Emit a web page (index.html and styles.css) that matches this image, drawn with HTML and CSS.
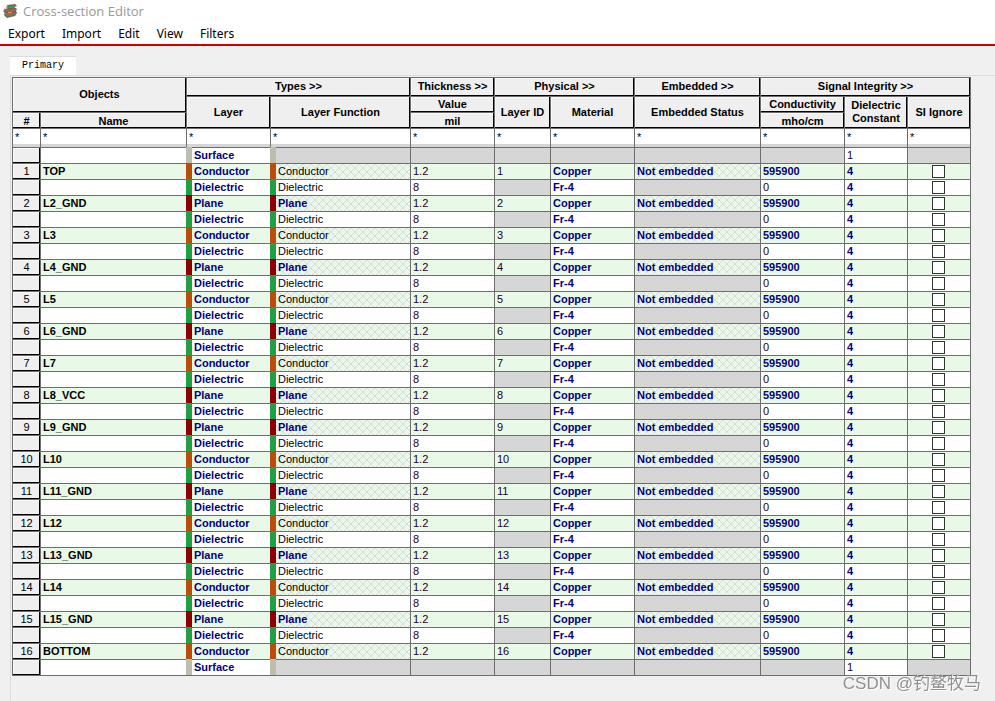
FILE: index.html
```html
<!DOCTYPE html>
<html lang="en">
<head>
<meta charset="utf-8">
<title>Cross-section Editor</title>
<link rel="stylesheet" href="styles.css">
</head>
<body>
<header class="titlebar">
  <svg class="logo" viewBox="0 0 16 16" aria-hidden="true">
    <path d="M5 2l8-1 2 2-3 1 3 2-1 2 1 2-2 3-8 2-3-3 1-2-2-2 2-2 3-1z" fill="#7a5f55"/>
    <path d="M6 3l6-1 2 1-5 2-4 0z" fill="#2e9a56"/>
    <path d="M2 7l4-1 7 0 1 1-5 2-6 0z" fill="#3a8b50"/>
    <path d="M3 11l4-1 7 0-2 2-6 2z" fill="#35925a"/>
    <path d="M4 4l9 1M2 6l5 2 7-1M2 10l5 2 7-2" fill="none" stroke="#c0605a" stroke-width="1"/>
    <path d="M6 9h4v1H6z" fill="#e0a030"/>
  </svg>
  <h1 class="title">Cross-section Editor</h1>
</header>
<nav class="menubar">
  <button type="button">Export</button>
  <button type="button">Import</button>
  <button type="button">Edit</button>
  <button type="button">View</button>
  <button type="button">Filters</button>
</nav>
<main class="workspace">
  <div class="tabs" role="tablist">
    <button type="button" class="tab" role="tab" aria-selected="true">Primary</button>
  </div>
  <section class="panel">
    <table class="stackup">
      <colgroup>
        <col class="c-num"><col><col class="c-84"><col class="c-func"><col class="c-84"><col class="c-id">
        <col class="c-84"><col class="c-emb"><col class="c-84"><col class="c-63"><col class="c-63">
      </colgroup>
      <thead>
        <tr class="groups">
          <th colspan="2" rowspan="2">Objects</th>
          <th colspan="2">Types &gt;&gt;</th>
          <th>Thickness &gt;&gt;</th>
          <th colspan="2">Physical &gt;&gt;</th>
          <th>Embedded &gt;&gt;</th>
          <th colspan="3">Signal Integrity &gt;&gt;</th>
        </tr>
        <tr class="fields">
          <th rowspan="2">Layer</th>
          <th rowspan="2">Layer Function</th>
          <th>Value</th>
          <th rowspan="2">Layer ID</th>
          <th rowspan="2">Material</th>
          <th rowspan="2">Embedded Status</th>
          <th>Conductivity</th>
          <th rowspan="2">Dielectric Constant</th>
          <th rowspan="2">SI Ignore</th>
        </tr>
        <tr>
          <th>#</th>
          <th>Name</th>
          <th>mil</th>
          <th>mho/cm</th>
        </tr>
        <tr class="filters">
          <td><input type="text" value="*" aria-label="Filter number"></td>
          <td><input type="text" value="*" aria-label="Filter name"></td>
          <td><input type="text" value="*" aria-label="Filter layer"></td>
          <td><input type="text" value="*" aria-label="Filter layer function"></td>
          <td><input type="text" value="*" aria-label="Filter thickness"></td>
          <td><input type="text" value="*" aria-label="Filter layer ID"></td>
          <td><input type="text" value="*" aria-label="Filter material"></td>
          <td><input type="text" value="*" aria-label="Filter embedded status"></td>
          <td><input type="text" value="*" aria-label="Filter conductivity"></td>
          <td><input type="text" value="*" aria-label="Filter dielectric constant"></td>
          <td><input type="text" value="*" aria-label="Filter SI ignore"></td>
        </tr>
      </thead>
      <tbody id="layers"></tbody>
    </table>
  </section>
</main>
<div class="watermark">CSDN @钓鳌牧马</div>
<script src="layers.js"></script>
</body>
</html>
```
FILE: styles.css
```css
* { box-sizing: border-box; }

body {
  margin: 0;
  min-height: 100vh;
  display: flex;
  flex-direction: column;
  background: #f0f0f0;
  color: #000;
  font: 11px/14px "Liberation Sans", Arial, sans-serif;
}

button { border: 0; padding: 0; background: none; color: inherit; font: inherit; }

.titlebar {
  display: flex;
  align-items: flex-start;
  gap: 5px;
  height: 24px;
  padding: 3px 0 0 2px;
  background: #fff;
}
.logo { width: 16px; height: 16px; }
.title {
  margin: 0;
  color: #999;
  font: 13px/16px "Open Sans", "Noto Sans", sans-serif;
}

.menubar {
  display: flex;
  gap: 17px;
  height: 22px;
  padding: 0 8px;
  border-bottom: 2px solid #c00;
  background: #fff;
  font: 12px/16px "Noto Sans", "Open Sans", sans-serif;
}

.workspace { flex: 1; display: flex; flex-direction: column; padding: 10px 0 0 10px; }
.tabs { display: flex; }
.tab {
  height: 19px;
  padding: 0 12px;
  border-top: 1px solid #dcdcdc;
  background: #fff;
  font: 10px/18px "Liberation Mono", monospace;
}
.panel {
  flex: 1;
  padding: 1px 24px 0 1px;
  border-top: 1px solid #dcdcdc;
  border-left: 1px solid #dcdcdc;
}

.stackup {
  width: 100%;
  table-layout: fixed;
  border-collapse: separate;
  border-spacing: 0;
  border-top: 1px solid #6e6e6e;
  border-left: 1px solid #6e6e6e;
}
.c-num { width: 28px; }
.c-84 { width: 84px; }
.c-func { width: 140px; }
.c-id { width: 56px; }
.c-emb { width: 126px; }
.c-63 { width: 63px; }

.stackup th, .stackup td {
  height: 16px;
  padding: 0 2px;
  border-right: 1px solid #6e6e6e;
  border-bottom: 1px solid #6e6e6e;
  background: #fff;
  text-align: left;
  white-space: nowrap;
}
.stackup th {
  background: #efefef;
  box-shadow: inset -1px -1px 0 #000, inset 1px 1px 0 #fafafa;
  text-align: center;
}
.stackup thead th { white-space: normal; }
.stackup .groups th { height: 19px; }
.stackup .groups th, .stackup .fields th { padding-bottom: 1px; line-height: 13px; }
.stackup tbody th { font-weight: 400; }
.stackup tbody th, .stackup tbody td { vertical-align: top; line-height: 14px; }

.stackup .filters td { height: 19px; padding: 0; background: #d6d6d6; vertical-align: top; }
.filters input {
  display: block;
  width: 100%;
  height: 15px;
  padding: 0 2px;
  border: 0;
  background: #fff;
  font: inherit;
}

.stackup .metal td { background-color: #e8f9e8; }
.stackup .off, .stackup .metal .off { background-color: #d6d6d6; }
.stackup .bold { font-weight: 700; }
.stackup .blue { color: #000080; font-weight: 700; }
.stackup .value { color: #200020; }
.stackup .hatch {
  background-image: url("data:image/svg+xml,%3Csvg xmlns='http://www.w3.org/2000/svg' width='8' height='8'%3E%3Cpath d='M0 0L8 8M8 0L0 8' stroke='%23dcd8e0' fill='none'/%3E%3C/svg%3E");
}
.stackup .strip { position: relative; padding-left: 7px; }
.strip::before {
  content: "";
  position: absolute;
  top: -1px;
  bottom: 0;
  left: -1px;
  width: 6px;
}
.surface .strip::before { background: #bdbdb0; }
.conductor .strip::before { background: #b84d0e; }
.plane .strip::before { background: #8b0000; }
.dielectric .strip::before { background: #20a044; }

.stackup .check { padding: 0 2px 0 0; }
.check input {
  appearance: none;
  display: block;
  width: 13px;
  height: 13px;
  margin: 1px auto 0;
  border: 1px solid #333;
  background: #fff;
}

.watermark {
  position: fixed;
  right: 14px;
  bottom: 5px;
  color: #909090;
  font: 17px/24px "Liberation Sans", "Noto Sans CJK SC", sans-serif;
  text-shadow: 1px 1px 0 #fff;
}
```
FILE: layers.js
```js
const names = ["TOP", "L2_GND", "L3", "L4_GND", "L5", "L6_GND", "L7", "L8_VCC",
  "L9_GND", "L10", "L11_GND", "L12", "L13_GND", "L14", "L15_GND", "BOTTOM"];
const planes = [2, 4, 6, 8, 9, 11, 13, 15];

const check = (label) =>
  `<td class="check"><input type="checkbox" aria-label="SI ignore ${label}"></td>`;

const surface = () => `<tr class="surface">
  <th></th><td></td><td class="strip blue">Surface</td><td class="strip off"></td>
  <td class="off"></td><td class="off"></td><td class="off"></td><td class="off"></td>
  <td class="off"></td><td class="value">1</td><td class="off"></td></tr>`;

const metal = (name, id) => {
  const plane = planes.includes(id);
  const type = plane ? "Plane" : "Conductor";
  return `<tr class="metal ${type.toLowerCase()}">
  <th>${id}</th><td class="bold">${name}</td><td class="strip blue">${type}</td>
  <td class="strip hatch ${plane ? "blue" : ""}">${type}</td><td class="value">1.2</td>
  <td class="value">${id}</td><td class="blue">Copper</td><td class="blue hatch">Not embedded</td>
  <td class="blue">595900</td><td class="blue">4</td>${check(name)}</tr>`;
};

const dielectric = (id) => `<tr class="dielectric">
  <th></th><td></td><td class="strip blue">Dielectric</td><td class="strip">Dielectric</td>
  <td class="value">8</td><td class="off"></td><td class="blue">Fr-4</td><td class="off"></td>
  <td class="value">0</td><td class="blue">4</td>${check("dielectric " + id)}</tr>`;

const rows = [surface()];
names.forEach((name, i) => {
  rows.push(metal(name, i + 1));
  if (i < names.length - 1) rows.push(dielectric(i + 1));
});
rows.push(surface());
document.getElementById("layers").innerHTML = rows.join("");
```
